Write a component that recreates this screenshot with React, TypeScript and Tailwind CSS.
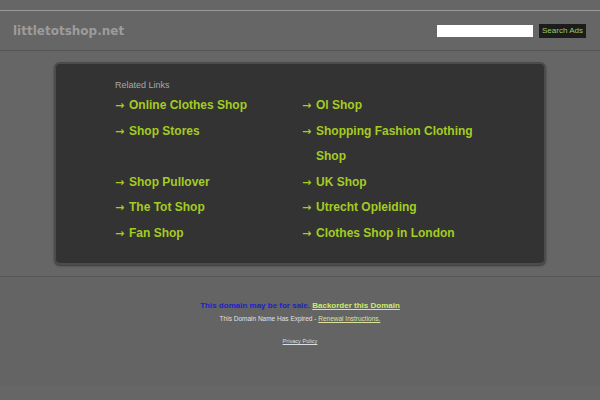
const leftLinks = ["Online Clothes Shop", "Shop Stores", "Shop Pullover", "The Tot Shop", "Fan Shop"];
const rightLinks = ["Ol Shop", "Shopping Fashion Clothing Shop", "UK Shop", "Utrecht Opleiding", "Clothes Shop in London"];

// interleave so the grid rows line up like the original table
const links = leftLinks.flatMap((l, i) => [l, rightLinks[i]]);

function LinkItem({ label }: { label: string }) {
  return (
    <li className="flex text-[12px] font-bold leading-[25.6px] text-[#a4cc22]">
      <span className="w-[14px] shrink-0 font-['DejaVu_Sans',sans-serif] text-[11px]">→</span>
      <a href="#" className="flex-1 hover:underline">{label}</a>
    </li>
  );
}

export default function App() {
  return (
    <div className="min-h-[400px] w-full bg-[#666666] font-['Liberation_Sans',Arial,sans-serif]">
      {/* top strip */}
      <div className="h-[10px]" />

      {/* HEADER */}
      <header className="flex h-[41px] items-center justify-between border-t border-b border-t-[#9a9a9a] border-b-[#555555] pl-[13px] pr-[14px]">
        <h1 className="font-['DejaVu_Sans',sans-serif] text-[12px] font-bold text-[#9c9c9c]">littletotshop.net</h1>
        <div className="flex items-center gap-[6px]">
          <input type="text" className="h-[12px] w-[96px] bg-white outline-none" />
          <button className="h-[14px] w-[47px] bg-[#1c1c1c] text-[8px] leading-[14px] text-[#99cc66]">Search Ads</button>
        </div>
      </header>

      {/* RELATED LINKS PANEL */}
      <main className="border-b border-[#585858] pt-[11px] pb-[11px]">
        <div className="mx-auto h-[203px] w-[492px] rounded-[6px] border-2 border-[#4c4c4c] bg-[#333333] shadow-[0_1px_2px_rgba(0,0,0,0.45)]">
          <div className="ml-[59px] w-[374px] pt-[15px]">
            <p className="text-[9px] leading-[13px] text-[#a8a8a8]">Related Links</p>
            <ul className="mt-[1px] grid grid-cols-2">
              {links.map((l) => (
                <LinkItem key={l} label={l} />
              ))}
            </ul>
          </div>
        </div>
      </main>

      {/* FOOTER */}
      <footer className="flex flex-col items-center bg-[#646464] pt-[23px] pb-[40px]">
        <p className="text-[8px] font-bold leading-[12px]">
          <span className="text-[#2020cc]">This domain may be for sale.</span>{" "}
          <a href="#" className="text-[#ccee66] underline">Backorder this Domain</a>
        </p>
        <p className="mt-[1px] text-[6.5px] leading-[12px] text-[#e0e0e0]">
          This Domain Name Has Expired - <a href="#" className="text-[#dde0a0] underline">Renewal Instructions.</a>
        </p>
        <a href="#" className="mt-[11px] text-[5.6px] leading-[10px] text-[#dddddd] underline">Privacy Policy</a>
      </footer>
    </div>
  );
}
